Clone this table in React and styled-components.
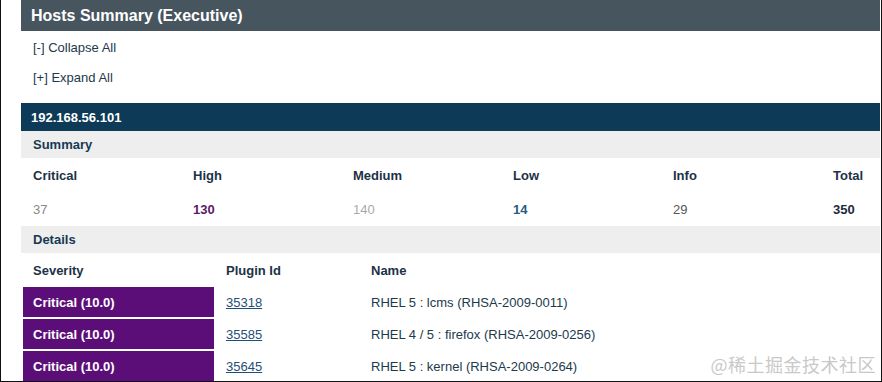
import React from 'react'
import styled, { createGlobalStyle } from 'styled-components'

const GlobalStyle = createGlobalStyle`
  html, body { margin: 0; padding: 0; background: #fff; }
  body { font-family: "Liberation Sans", Arial, sans-serif; font-size: 13px; }
`

const Frame = styled.div`
  position: relative;
  width: 882px;
  height: 382px;
  box-sizing: border-box;
  border: 1px solid #111;
  border-top: none;
  overflow: hidden;
  padding-left: 20px;
  background: #fff;
`

const Report = styled.div`
  width: 859px;
`

const TitleBar = styled.div`
  height: 31px;
  display: flex;
  align-items: center;
  padding-left: 10px;
  background: #47555f;
  color: #fff;
  font-weight: bold;
  font-size: 16px;
`

const Toggles = styled.div`
  display: flex;
  flex-direction: column;
  padding: 9px 0 0 12px;
  height: 63px;
  gap: 14px;
`

const Toggle = styled.a`
  color: #1c3a4b;
  font-size: 13px;
  line-height: 16px;
  text-decoration: none;
`

const HostBar = styled.div`
  height: 28px;
  display: flex;
  align-items: center;
  padding-left: 10px;
  background: #0c3a57;
  color: #fff;
  font-weight: bold;
  font-size: 13px;
`

const SectionBar = styled.div`
  height: 27px;
  display: flex;
  align-items: center;
  padding-left: 12px;
  background: #eeeeee;
  color: #173a53;
  font-weight: bold;
  font-size: 13px;
`

const SummaryGrid = styled.div`
  display: grid;
  grid-template-columns: repeat(6, 160px);
  grid-auto-rows: 34px;
  padding-left: 12px;
  align-items: center;
  background: #fff;
`

const Label = styled.div`
  color: #1c3246;
  font-weight: bold;
`

const Count = styled.div`
  color: ${({ $color }) => $color};
  font-weight: ${({ $bold }) => ($bold ? 'bold' : 'normal')};
`

const Table = styled.div`
  display: grid;
  grid-template-columns: 191px 143px 1fr;
  grid-auto-rows: 30px;
  gap: 2px;
  padding: 2px;
`

const HeadCell = styled.div`
  display: flex;
  align-items: center;
  padding-left: 10px;
  color: #1c3246;
  font-weight: bold;
`

const SeverityCell = styled.div`
  display: flex;
  align-items: center;
  padding-left: 10px;
  background: #5b0e78;
  color: #fff;
  font-weight: bold;
`

const Cell = styled.div`
  display: flex;
  align-items: center;
  padding-left: 10px;
  color: #1c3a4b;
`

const PluginLink = styled.a`
  color: #1f4f78;
  text-decoration: underline;
`

const Watermark = styled.div`
  position: absolute;
  right: 5px;
  bottom: 4px;
  color: #c9c9c9;
  font-size: 18px;
  font-family: "Noto Sans CJK SC", "Liberation Sans", sans-serif;
  letter-spacing: 0.5px;
`

const counts = [
  { label: 'Critical', value: 37, color: '#888888' },
  { label: 'High', value: 130, color: '#5a1a6b', bold: true },
  { label: 'Medium', value: 140, color: '#aaaaaa' },
  { label: 'Low', value: 14, color: '#2a5a85', bold: true },
  { label: 'Info', value: 29, color: '#555555' },
  { label: 'Total', value: 350, color: '#1b2b3b', bold: true },
]

const findings = [
  { id: '35318', name: 'RHEL 5 : lcms (RHSA-2009-0011)' },
  { id: '35585', name: 'RHEL 4 / 5 : firefox (RHSA-2009-0256)' },
  { id: '35645', name: 'RHEL 5 : kernel (RHSA-2009-0264)' },
]

const App = () => {
  return (
    <>
      <GlobalStyle />
      <Frame>
        <Report>
          <TitleBar>Hosts Summary (Executive)</TitleBar>
          <Toggles>
            <Toggle href="#collapse">[-] Collapse All</Toggle>
            <Toggle href="#expand">[+] Expand All</Toggle>
          </Toggles>
          <HostBar>192.168.56.101</HostBar>
          <SectionBar>Summary</SectionBar>
          <SummaryGrid>
            {counts.map((c) => (
              <Label key={c.label}>{c.label}</Label>
            ))}
            {counts.map((c) => (
              <Count key={c.label} $color={c.color} $bold={c.bold}>
                {c.value}
              </Count>
            ))}
          </SummaryGrid>
          <SectionBar>Details</SectionBar>
          <Table>
            <HeadCell>Severity</HeadCell>
            <HeadCell>Plugin Id</HeadCell>
            <HeadCell>Name</HeadCell>
            {findings.map((f) => (
              <React.Fragment key={f.id}>
                <SeverityCell>Critical (10.0)</SeverityCell>
                <Cell>
                  <PluginLink href={'#' + f.id}>{f.id}</PluginLink>
                </Cell>
                <Cell>{f.name}</Cell>
              </React.Fragment>
            ))}
          </Table>
        </Report>
        <Watermark>@稀土掘金技术社区</Watermark>
      </Frame>
    </>
  )
}

export default App
